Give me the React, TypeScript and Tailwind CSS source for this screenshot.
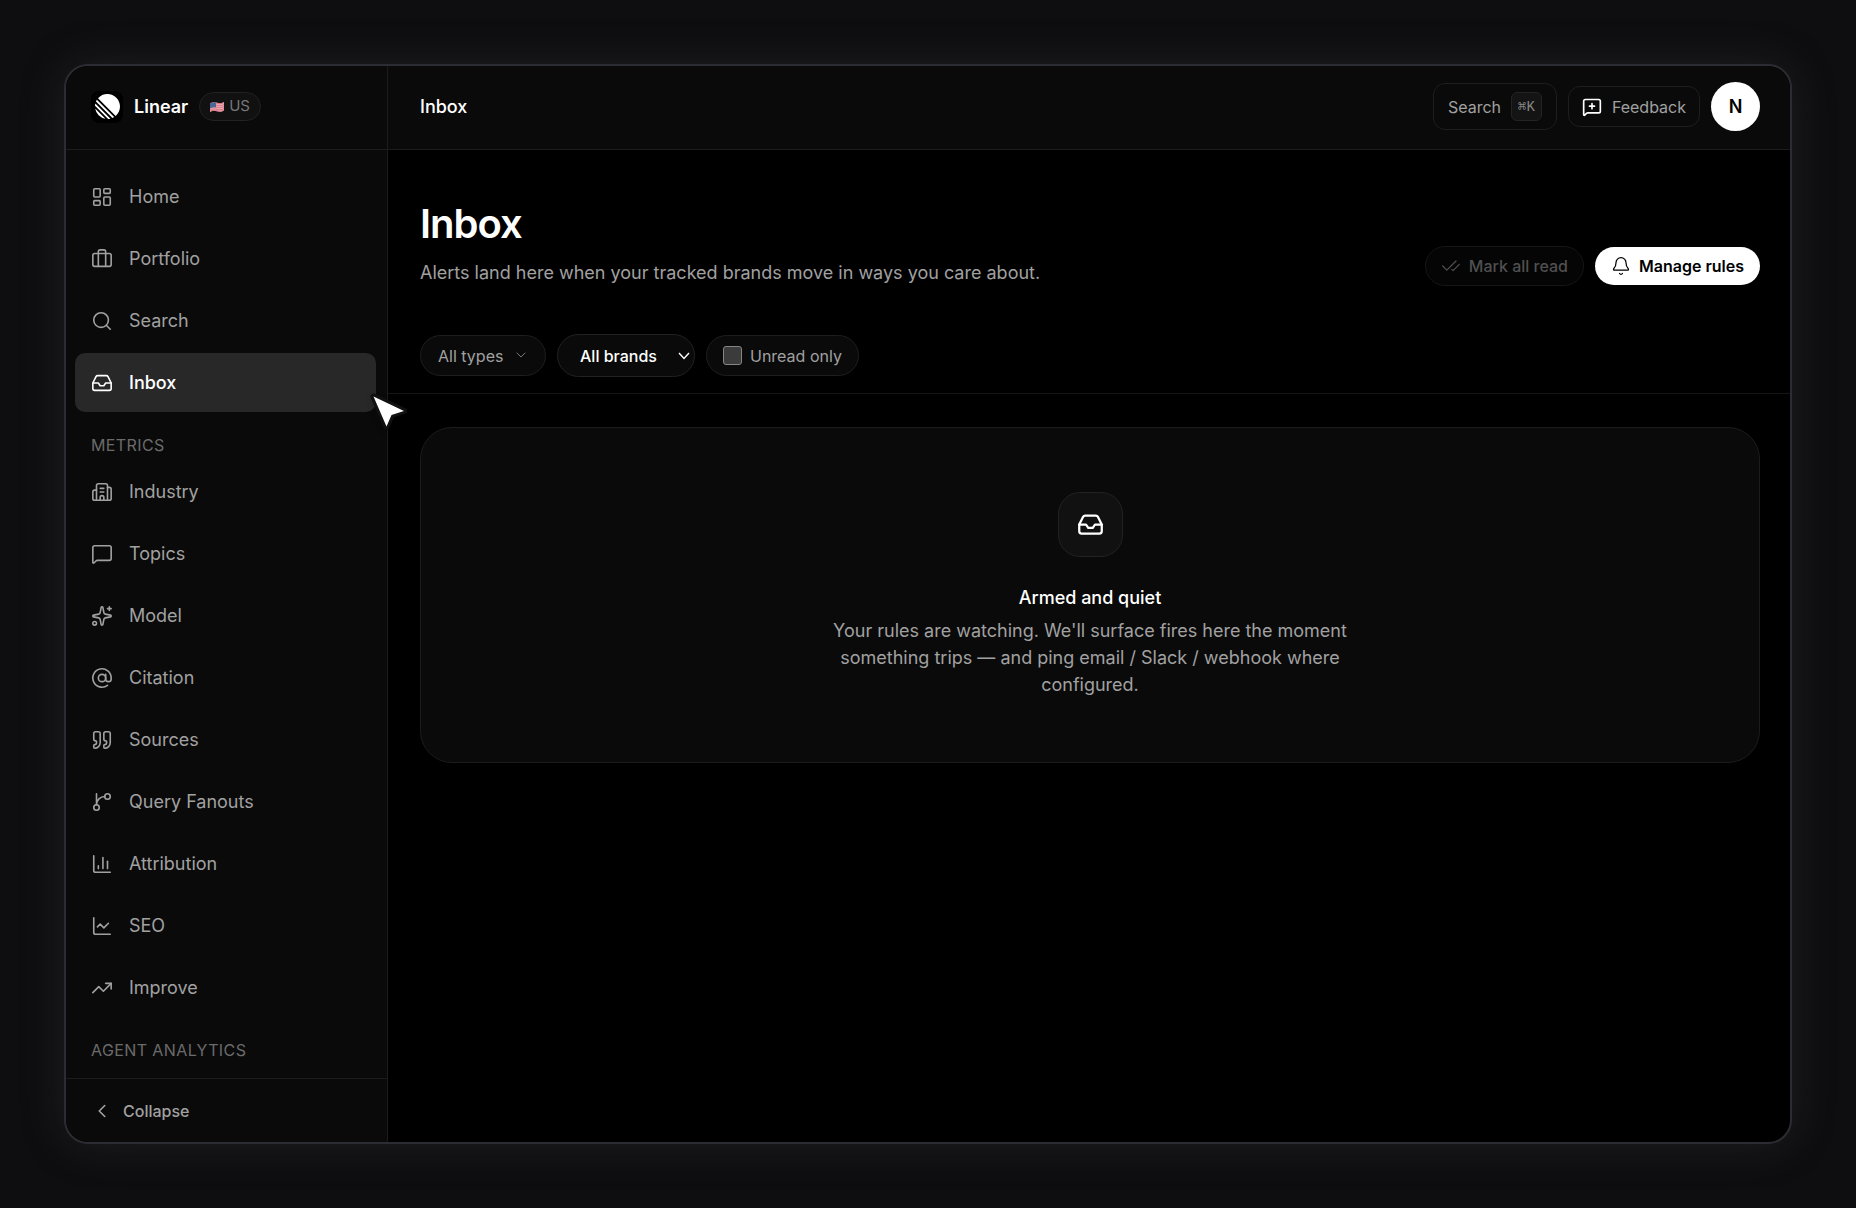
import React, { useState } from 'react';
import {
  AtSign,
  Bell,
  Briefcase,
  Building2,
  ChartColumn,
  ChartLine,
  CheckCheck,
  ChevronDown,
  ChevronLeft,
  Inbox,
  LayoutDashboard,
  MessageSquare,
  MessageSquarePlus,
  Quote,
  Search,
  Sparkles,
  TrendingUp,
} from 'lucide-react';

interface IconProps {
  size?: number | string;
  strokeWidth?: number | string;
}

interface NavEntry {
  label: string;
  icon: React.ComponentType<IconProps>;
}

// branch that leaves the stem from the upper right node
const Branch: React.FC<IconProps> = ({ size = 24, strokeWidth = 2 }) => (
  <svg
    width={size}
    height={size}
    viewBox="0 0 24 24"
    fill="none"
    stroke="currentColor"
    strokeWidth={strokeWidth}
    strokeLinecap="round"
    strokeLinejoin="round"
    aria-hidden="true"
  >
    <path d="M15 6a9 9 0 0 0-9 9V3" />
    <circle cx="18" cy="6" r="3" />
    <circle cx="6" cy="18" r="3" />
  </svg>
);

const mainNav: NavEntry[] = [
  { label: 'Home', icon: LayoutDashboard },
  { label: 'Portfolio', icon: Briefcase },
  { label: 'Search', icon: Search },
  { label: 'Inbox', icon: Inbox },
];

const metricsNav: NavEntry[] = [
  { label: 'Industry', icon: Building2 },
  { label: 'Topics', icon: MessageSquare },
  { label: 'Model', icon: Sparkles },
  { label: 'Citation', icon: AtSign },
  { label: 'Sources', icon: Quote },
  { label: 'Query Fanouts', icon: Branch },
  { label: 'Attribution', icon: ChartColumn },
  { label: 'SEO', icon: ChartLine },
  { label: 'Improve', icon: TrendingUp },
];

const LinearLogo: React.FC = () => (
  <span className="flex h-8 w-8 items-center justify-center rounded-lg bg-black">
    <svg viewBox="0 0 24 24" className="h-[25px] w-[25px]" fill="#fff" aria-hidden="true">
      <path d="M2.886 4.18A11.982 11.982 0 0 1 11.99 0C18.624 0 24 5.376 24 12.009c0 3.64-1.62 6.903-4.18 9.105L2.887 4.18ZM1.817 5.626l16.556 16.556c-.524.33-1.075.62-1.65.866L.951 7.277c.247-.575.537-1.126.866-1.65ZM.322 9.163l14.515 14.515c-.71.172-1.443.282-2.195.322L0 11.358a12 12 0 0 1 .322-2.195Zm-.17 4.862 9.823 9.824a12.02 12.02 0 0 1-9.824-9.824Z" />
    </svg>
  </span>
);

const UsFlag: React.FC = () => (
  <svg viewBox="0 0 28 20" className="h-[10px] w-[14px]" aria-hidden="true">
    <path d="M0 3C5 0 9 0 14 1.500S23 3 28 0V17C23 20 19 20 14 18.500S5 17 0 20Z" fill="#e9b3ba" />
    <g fill="none" stroke="#d86f80" strokeWidth="2">
      <path d="M0 4C5 1 9 1 14 2.500S23 4 28 1" />
      <path d="M0 8C5 5 9 5 14 6.500S23 8 28 5" />
      <path d="M0 12C5 9 9 9 14 10.500S23 12 28 9" />
      <path d="M0 16C5 13 9 13 14 14.500S23 16 28 13" />
      <path d="M0 19C5 16 9 16 14 17.500S23 19 28 16" />
    </g>
    <path d="M0 3C4 .6 8 .2 12 1V11C8 10 4 10.600 0 13Z" fill="#4d6594" />
  </svg>
);

const Cursor: React.FC = () => (
  <svg
    viewBox="0 0 48 48"
    className="pointer-events-none absolute top-[321px] left-[298px] z-20 h-12 w-12 drop-shadow-md"
    aria-hidden="true"
  >
    <path
      d="M9.500 9.500 40 24 27.500 28 22.500 39.500Z"
      fill="#fff"
      stroke="#111"
      strokeWidth="6"
      strokeLinejoin="round"
      paintOrder="stroke"
    />
  </svg>
);

const NavItem: React.FC<{ entry: NavEntry; active: boolean; onSelect: () => void }> = ({ entry, active, onSelect }) => {
  const Icon = entry.icon;
  return (
    <a
      href="#"
      onClick={onSelect}
      className={`flex h-[59px] items-center gap-4 rounded-[10px] px-4 text-lg ${
        active ? 'bg-[#282828] font-medium text-white' : 'text-[#a1a1a1] hover:text-white'
      }`}
    >
      <Icon size={22} strokeWidth={1.75} />
      {entry.label}
    </a>
  );
};

const SectionLabel: React.FC<{ children: React.ReactNode }> = ({ children }) => (
  <h2 className="px-4 pt-[18px] pb-0.5 text-base leading-6 tracking-wide text-[#6b6b6b] uppercase">{children}</h2>
);

export default function App() {
  const [page, setPage] = useState<string>('Inbox');
  const [unreadOnly, setUnreadOnly] = useState<boolean>(false);

  return (
    <div className="flex min-h-screen bg-[#0e0e10] p-16 font-['Inter',sans-serif] text-white">
      <div className="relative flex flex-1 overflow-hidden rounded-3xl border-2 border-[#2c2c33] bg-black shadow-[0_0_44px_rgba(70,70,84,0.3)]">
        <aside className="flex w-[322px] shrink-0 flex-col border-r border-[#1c1c1c] bg-[#0a0a0a]">
          <div className="flex h-[84px] items-center gap-[11px] border-b border-[#1c1c1c] px-[25px] pb-0.5">
            <LinearLogo />
            <span className="text-lg font-semibold">Linear</span>
            <span className="flex h-[29px] items-center gap-[5px] rounded-full border border-[#222] bg-[#111] px-2.5 text-[15px] text-[#777]">
              <UsFlag />
              US
            </span>
          </div>
          <nav className="flex flex-1 flex-col gap-[3px] pt-[17px] pr-[11px] pl-[9px]">
            {mainNav.map((entry) => (
              <NavItem key={entry.label} entry={entry} active={page === entry.label} onSelect={() => setPage(entry.label)} />
            ))}
            <SectionLabel>Metrics</SectionLabel>
            {metricsNav.map((entry) => (
              <NavItem key={entry.label} entry={entry} active={page === entry.label} onSelect={() => setPage(entry.label)} />
            ))}
            <SectionLabel>Agent analytics</SectionLabel>
          </nav>
          <div className="flex h-16 items-center border-t border-[#1c1c1c] px-[25px]">
            <button type="button" className="flex items-center gap-2.5 text-base font-medium text-[#a1a1a1]">
              <ChevronLeft size={22} strokeWidth={1.75} />
              Collapse
            </button>
          </div>
        </aside>

        <div className="flex min-w-0 flex-1 flex-col">
          <header className="flex h-[84px] items-center justify-between border-b border-[#1c1c1c] bg-[#0a0a0a] pr-[30px] pb-0.5 pl-8">
            <span className="text-lg font-medium">Inbox</span>
            <div className="flex items-center gap-[11px]">
              <button
                type="button"
                className="flex h-[47px] items-center gap-2.5 rounded-xl border border-[#1e1e1e] px-3.5 text-base text-[#a1a1a1]"
              >
                Search
                <kbd className="flex h-[29px] items-center rounded-md border border-[#242424] bg-[#141414] px-1.5 font-['Liberation_Mono','DejaVu_Sans_Mono',monospace] text-sm text-[#888]">
                  ⌘K
                </kbd>
              </button>
              <button
                type="button"
                className="flex h-[41px] items-center gap-2.5 rounded-xl border border-[#1e1e1e] px-[13px] text-base text-[#a1a1a1]"
              >
                <MessageSquarePlus size={20} className="text-white" />
                Feedback
              </button>
              <button
                type="button"
                className="flex h-[49px] w-[49px] items-center justify-center rounded-full bg-white text-lg font-semibold text-black"
              >
                N
              </button>
            </div>
          </header>

          <main>
            <div className="border-b border-[#161616] pt-[50px] pr-[30px] pb-4 pl-8">
              <div className="flex items-end justify-between">
                <div>
                  <h1 className="text-[40px] leading-[48px] font-semibold tracking-tight">Inbox</h1>
                  <p className="mt-[11px] text-lg leading-[27px] text-[#a1a1a1]">
                    Alerts land here when your tracked brands move in ways you care about.
                  </p>
                </div>
                <div className="flex items-center gap-[11px]">
                  <button
                    type="button"
                    disabled
                    className="flex h-10 items-center gap-2 rounded-full border border-[#151515] bg-[#050505] px-[15px] text-base font-medium text-[#505050]"
                  >
                    <CheckCheck size={20} strokeWidth={1.5} />
                    Mark all read
                  </button>
                  <button
                    type="button"
                    className="flex h-[38px] items-center gap-2 rounded-full bg-white px-4 text-base font-semibold text-black"
                  >
                    <Bell size={20} strokeWidth={1.5} />
                    Manage rules
                  </button>
                </div>
              </div>

              <div className="mt-12 flex items-center gap-[11px]">
                <div className="relative">
                  <select
                    aria-label="Alert type"
                    className="h-[41px] appearance-none rounded-full border border-[#1e1e1e] bg-[#0a0a0a] pr-[41px] pl-[17px] text-base text-[#a1a1a1]"
                  >
                    <option>All types</option>
                  </select>
                  <ChevronDown
                    size={16}
                    strokeWidth={1.5}
                    className="pointer-events-none absolute top-3 right-[17px] text-[#777]"
                  />
                </div>
                <div className="relative">
                  <select
                    aria-label="Brand"
                    className="h-[43px] appearance-none rounded-full border border-[#222] bg-[#0a0a0a] pr-[37px] pl-[22px] text-base font-medium text-white"
                  >
                    <option>All brands</option>
                  </select>
                  <svg
                    viewBox="0 0 12 8"
                    className="pointer-events-none absolute top-[18px] right-[5px] h-2 w-3"
                    fill="none"
                    stroke="#fff"
                    strokeWidth="1.400"
                    aria-hidden="true"
                  >
                    <path d="m1 1 5 5.500L11 1" />
                  </svg>
                </div>
                <label className="flex h-[41px] items-center gap-2 rounded-full border border-[#1e1e1e] bg-[#0a0a0a] px-4 text-base text-[#a1a1a1]">
                  <input
                    type="checkbox"
                    checked={unreadOnly}
                    onChange={(e) => setUnreadOnly(e.target.checked)}
                    className="h-[19px] w-[19px] appearance-none rounded-[3px] border border-[#858585] bg-[#3b3b3b] checked:bg-white"
                  />
                  Unread only
                </label>
              </div>
            </div>

            <div className="pt-[33px] pr-[30px] pb-8 pl-8">
              <section className="flex flex-col items-center rounded-[32px] border border-[#1c1c1c] bg-[#0a0a0a] px-8 py-16 text-center">
                <span className="flex h-[65px] w-[65px] items-center justify-center rounded-[22px] border border-[#222] bg-[#111]">
                  <Inbox size={27} />
                </span>
                <h3 className="mt-[27px] text-lg leading-[27px] font-medium">Armed and quiet</h3>
                <p className="mt-1.5 max-w-[540px] text-lg leading-[27px] text-[#a1a1a1]">
                  Your rules are watching. We'll surface fires here the moment something trips — and ping email / Slack /
                  webhook where configured.
                </p>
              </section>
            </div>
          </main>
        </div>

        <Cursor />
      </div>
    </div>
  );
}
